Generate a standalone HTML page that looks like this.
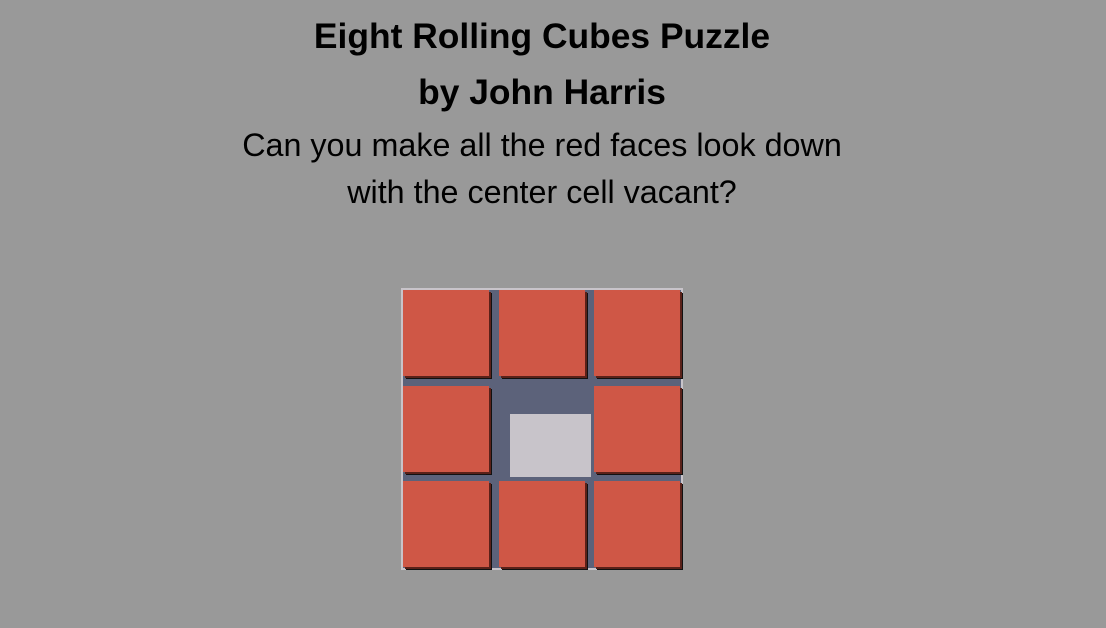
<!DOCTYPE html>
<html><head><meta charset="utf-8"><style>
html,body{margin:0;padding:0;background:#999999;width:1106px;height:628px;overflow:hidden;font-family:"Liberation Sans",sans-serif;color:#000}
.t{position:absolute;left:0;width:1084px;text-align:center;white-space:nowrap}
.b{font-weight:bold;font-size:35.4px}
.n{font-size:32.3px}
#board{position:absolute;left:401px;top:288px;width:278px;height:278px;border:2px solid #c8c4ca;background:#5c627a}
.c{position:absolute;width:86px;height:86px;background:#cf5746;box-shadow:2px 2px 0 #5a2119,3px 3px 0 #111}
</style></head><body>
<div class="t b" style="top:16px">Eight Rolling Cubes Puzzle</div>
<div class="t b" style="top:72px">by John Harris</div>
<div class="t n" style="top:127px">Can you make all the red faces look down</div>
<div class="t n" style="top:174px">with the center cell vacant?</div>
<div id="board">
<div style="position:absolute;left:107px;top:124px;width:81px;height:63px;background:#c8c4ca"></div>
<div class="c" style="left:0;top:0"></div>
<div class="c" style="left:96px;top:0"></div>
<div class="c" style="left:191px;top:0"></div>
<div class="c" style="left:0;top:96px"></div>
<div class="c" style="left:191px;top:96px"></div>
<div class="c" style="left:0;top:191px"></div>
<div class="c" style="left:96px;top:191px"></div>
<div class="c" style="left:191px;top:191px"></div>
</div>
</body></html>
